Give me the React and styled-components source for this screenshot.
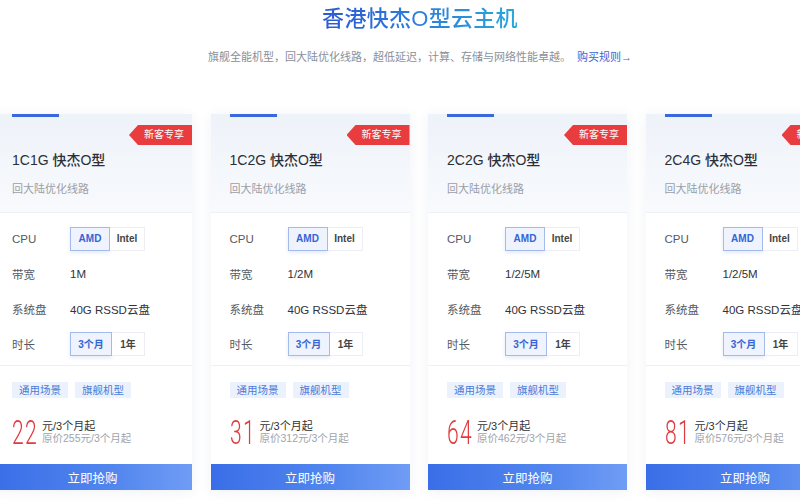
import React from 'react';
import styled, { createGlobalStyle } from 'styled-components';

const GlobalStyle = createGlobalStyle`
  html, body {
    margin: 0;
    padding: 0;
    background: #fff;
  }
  body {
    font-family: "Liberation Sans", "Noto Sans CJK SC", sans-serif;
    color: #333;
  }
`;

const plans = [
  { name: '1C1G 快杰O型', bandwidth: '1M', price: '22', origin: '255' },
  { name: '1C2G 快杰O型', bandwidth: '1/2M', price: '31', origin: '312' },
  { name: '2C2G 快杰O型', bandwidth: '1/2/5M', price: '64', origin: '462' },
  { name: '2C4G 快杰O型', bandwidth: '1/2/5M', price: '81', origin: '576' }
];

const App = () => {
  return (
    <Page>
      <GlobalStyle />
      <Header>
        <Title>香港快杰O型云主机</Title>
        <Subtitle>
          旗舰全能机型，回大陆优化线路，超低延迟，计算、存储与网络性能卓越。
          <RuleLink>购买规则→</RuleLink>
        </Subtitle>
      </Header>
      <Cards>
        {plans.map((plan) => (
          <Card key={plan.name}>
            <CardHead>
              <TopBar />
              <Badge>新客专享</Badge>
              <PlanName>{plan.name}</PlanName>
              <PlanDesc>回大陆优化线路</PlanDesc>
            </CardHead>
            <Specs>
              <SpecRow>
                <SpecLabel>CPU</SpecLabel>
                <OptionGroup>
                  <Option $active $w={40}>AMD</Option>
                  <Option $w={35}>Intel</Option>
                </OptionGroup>
              </SpecRow>
              <SpecRow>
                <SpecLabel>带宽</SpecLabel>
                <SpecValue>{plan.bandwidth}</SpecValue>
              </SpecRow>
              <SpecRow>
                <SpecLabel>系统盘</SpecLabel>
                <SpecValue>40G RSSD云盘</SpecValue>
              </SpecRow>
              <SpecRow>
                <SpecLabel>时长</SpecLabel>
                <OptionGroup>
                  <Option $active $w={42}>3个月</Option>
                  <Option $w={33}>1年</Option>
                </OptionGroup>
              </SpecRow>
            </Specs>
            <Bottom>
              <Tags>
                <Tag>通用场景</Tag>
                <Tag>旗舰机型</Tag>
              </Tags>
              <PriceRow>
                <PriceNum>
                  <span>{plan.price}</span>
                </PriceNum>
                <PriceText>
                  <PriceUnit>元/3个月起</PriceUnit>
                  <PriceOrigin>原价{plan.origin}元/3个月起</PriceOrigin>
                </PriceText>
              </PriceRow>
            </Bottom>
            <BuyButton>立即抢购</BuyButton>
          </Card>
        ))}
      </Cards>
    </Page>
  );
};

const Page = styled.div`
  width: 800px;
  height: 500px;
  overflow: hidden;
  background: #fff;
`;

const Header = styled.div`
  display: flex;
  flex-direction: column;
  align-items: center;
  padding: 4px 0 0 40px;
`;

const Title = styled.h1`
  margin: 0;
  font-size: 22px;
  line-height: 30px;
  font-weight: 500;
  letter-spacing: 0.3px;
  background: linear-gradient(90deg, #2d58d4 0%, #2b86dc 60%, #29a8dc 100%);
  -webkit-background-clip: text;
  background-clip: text;
  color: transparent;
`;

const Subtitle = styled.p`
  margin: 16px 0 0;
  font-size: 11px;
  line-height: 14px;
  color: #8a8f99;
`;

const RuleLink = styled.span`
  margin-left: 6px;
  color: #3a66d8;
`;

const Cards = styled.div`
  display: flex;
  gap: 18.5px;
  margin-top: 50px;
  margin-left: -7px;
`;

const Card = styled.div`
  position: relative;
  flex-shrink: 0;
  width: 199px;
  background: #fff;
  box-shadow: 0 2px 12px rgba(40, 70, 130, 0.07);
  display: flex;
  flex-direction: column;
`;

const CardHead = styled.div`
  height: 99px;
  box-sizing: border-box;
  padding: 0 19px;
  background: linear-gradient(180deg, #eef2f9 0%, #f8fafd 100%);
  border-bottom: 1px solid #edf0f5;
`;

const TopBar = styled.div`
  width: 47px;
  height: 3px;
  background: #3968dc;
`;

const Badge = styled.div`
  position: absolute;
  top: 11px;
  right: 0;
  width: 63px;
  height: 20px;
  box-sizing: border-box;
  padding-left: 15px;
  background: #e83c3f;
  clip-path: polygon(9px 0, 100% 0, 100% 100%, 9px 100%, 0 50%);
  color: #fff;
  font-size: 10px;
  line-height: 20px;
`;

const PlanName = styled.div`
  margin-top: 33px;
  font-size: 14px;
  line-height: 20px;
  font-weight: 500;
  color: #2b2f38;
`;

const PlanDesc = styled.div`
  margin-top: 10px;
  font-size: 11px;
  line-height: 18px;
  color: #9a9ea6;
`;

const Specs = styled.div`
  padding: 8px 19px 4px;
  border-bottom: 1px solid #edf0f5;
`;

const SpecRow = styled.div`
  display: flex;
  align-items: center;
  height: 35px;
`;

const SpecLabel = styled.div`
  width: 58px;
  font-size: 11.5px;
  color: #555a63;
`;

const SpecValue = styled.div`
  font-size: 11.5px;
  color: #2f333b;
`;

const OptionGroup = styled.div`
  display: flex;
`;

const Option = styled.div`
  width: ${(p) => p.$w}px;
  height: 24px;
  box-sizing: border-box;
  display: flex;
  align-items: center;
  justify-content: center;
  font-size: 10px;
  font-weight: 700;
  border: 1px solid ${(p) => (p.$active ? '#a3bbec' : '#eceef3')};
  background: ${(p) => (p.$active ? '#eef3fd' : '#fff')};
  color: ${(p) => (p.$active ? '#3564d6' : '#444')};
  box-shadow: ${(p) => (p.$active ? '0 2px 4px rgba(50, 90, 180, 0.12)' : 'none')};
  & + & {
    border-left: none;
  }
`;

const Bottom = styled.div`
  flex: 1;
  padding: 16px 19px 0;
`;

const Tags = styled.div`
  display: flex;
  gap: 7px;
`;

const Tag = styled.div`
  height: 16px;
  padding: 0 7px;
  background: #ebf2fd;
  color: #4a7ad8;
  font-size: 10.5px;
  line-height: 16px;
`;

const PriceRow = styled.div`
  display: flex;
  align-items: center;
  margin-top: 17px;
  height: 34px;
`;

const PriceNum = styled.div`
  width: 30px;
  height: 34px;
  span {
    display: inline-block;
    font-family: Roboto, "Liberation Sans", sans-serif;
    font-weight: 300;
    font-size: 34px;
    line-height: 34px;
    color: #e0393e;
    transform: scaleX(0.62);
    transform-origin: left center;
    letter-spacing: 2px;
  }
`;

const PriceText = styled.div`
  display: flex;
  flex-direction: column;
`;

const PriceUnit = styled.div`
  font-size: 11px;
  line-height: 12px;
  color: #333;
`;

const PriceOrigin = styled.div`
  font-size: 10.5px;
  line-height: 13px;
  color: #a0a4ab;
`;

const BuyButton = styled.div`
  margin-top: 15px;
  height: 26px;
  display: flex;
  align-items: center;
  justify-content: center;
  background: linear-gradient(90deg, #3a6ee8 0%, #5286ee 60%, #6f9cf5 100%);
  color: #fff;
  font-size: 12.5px;
`;

export default App;
